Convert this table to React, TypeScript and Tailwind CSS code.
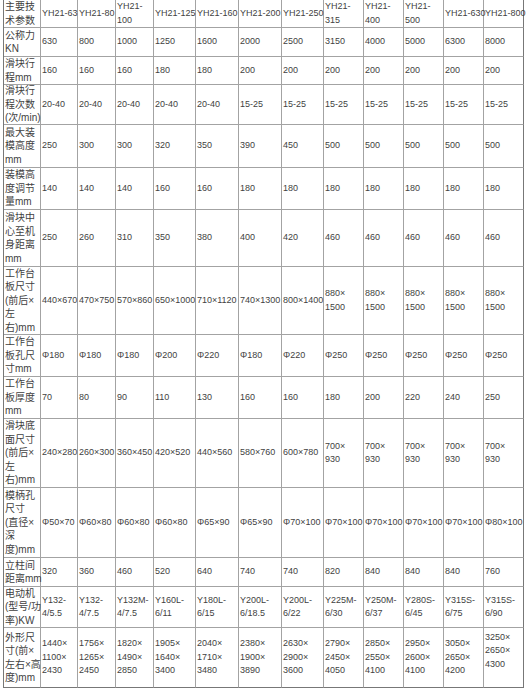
const COLS = [36, 36, 37, 37, 41, 42, 42, 41, 39, 39, 39, 39, 39];
const ROWS = [27, 28, 27, 39, 42, 41, 56, 67, 41, 41, 68, 69, 28, 40, 59];

const DATA: string[][] = [
  ['主要技\n术参数', 'YH21-63', 'YH21-80', 'YH21-\n100', 'YH21-125', 'YH21-160', 'YH21-200', 'YH21-250', 'YH21-\n315', 'YH21-\n400', 'YH21-\n500', 'YH21-630', 'YH21-800'],
  ['公称力\nKN', '630', '800', '1000', '1250', '1600', '2000', '2500', '3150', '4000', '5000', '6300', '8000'],
  ['滑块行\n程mm', '160', '160', '160', '180', '180', '200', '200', '200', '200', '200', '200', '200'],
  ['滑块行\n程次数\n(次/min)', '20-40', '20-40', '20-40', '20-40', '20-40', '15-25', '15-25', '15-25', '15-25', '15-25', '15-25', '15-25'],
  ['最大装\n模高度\nmm', '250', '300', '300', '320', '350', '390', '450', '500', '500', '500', '500', '500'],
  ['装模高\n度调节\n量mm', '140', '140', '140', '160', '160', '180', '180', '180', '180', '180', '180', '180'],
  ['滑块中\n心至机\n身距离\nmm', '250', '260', '310', '350', '380', '400', '420', '460', '460', '460', '460', '460'],
  ['工作台\n板尺寸\n(前后×\n左\n右)mm', '440×670', '470×750', '570×860', '650×1000', '710×1120', '740×1300', '800×1400', '880×\n1500', '880×\n1500', '880×\n1500', '880×\n1500', '880×\n1500'],
  ['工作台\n板孔尺\n寸mm', 'Φ180', 'Φ180', 'Φ180', 'Φ200', 'Φ220', 'Φ180', 'Φ220', 'Φ250', 'Φ250', 'Φ250', 'Φ250', 'Φ250'],
  ['工作台\n板厚度\nmm', '70', '80', '90', '110', '130', '160', '160', '180', '200', '220', '240', '250'],
  ['滑块底\n面尺寸\n(前后×\n左\n右)mm', '240×280', '260×300', '360×450', '420×520', '440×560', '580×760', '600×780', '700×\n930', '700×\n930', '700×\n930', '700×\n930', '700×\n930'],
  ['模柄孔\n尺寸\n(直径×\n深\n度)mm', 'Φ50×70', 'Φ60×80', 'Φ60×80', 'Φ60×80', 'Φ65×90', 'Φ65×90', 'Φ70×100', 'Φ70×100', 'Φ70×100', 'Φ70×100', 'Φ70×100', 'Φ80×100'],
  ['立柱间\n距离mm', '320', '360', '460', '520', '640', '740', '740', '820', '840', '840', '840', '760'],
  ['电动机\n(型号/功\n率)KW', 'Y132-\n4/5.5', 'Y132-\n4/7.5', 'Y132M-\n4/7.5', 'Y160L-\n6/11', 'Y180L-\n6/15', 'Y200L-\n6/18.5', 'Y200L-\n6/22', 'Y225M-\n6/30', 'Y250M-\n6/37', 'Y280S-\n6/45', 'Y315S-\n6/75', 'Y315S-\n6/90'],
  ['外形尺\n寸(前×\n左右×高\n度)mm', '1440×\n1100×\n2430', '1756×\n1265×\n2450', '1820×\n1490×\n2850', '1905×\n1640×\n3400', '2040×\n1710×\n3480', '2380×\n1900×\n3890', '2630×\n2900×\n3600', '2790×\n2450×\n4050', '2850×\n2550×\n4100', '2950×\n2600×\n4100', '3050×\n2650×\n4200', '3250×\n2650×\n4300\n\u00a0'],
];

const lastCol = COLS.length - 1;
const lastRow = ROWS.length - 1;

export default function App() {
  return (
    <div className="h-[689px] w-[528px] overflow-hidden bg-white pl-[3px] font-['Liberation_Sans','Noto_Sans_CJK_SC',sans-serif] text-[9px] leading-[13.5px] text-[#3f3f3f]">
      <div
        className="grid w-max border-l border-[#777]"
        style={{
          gridTemplateColumns: COLS.map((w) => `${w + 1}px`).join(' '),
          gridTemplateRows: ROWS.map((h) => `${h + 1}px`).join(' '),
        }}
      >
        {DATA.map((row, r) =>
          row.map((cell, c) => (
            <div
              key={`${r}-${c}`}
              className={[
                'flex items-center whitespace-pre border-b border-r pl-px',
                c === 0 ? 'text-[10px]' : '',
                c === lastCol ? 'border-r-[#777]' : 'border-r-[#a3a3a3]',
                r === lastRow ? 'border-b-[#777]' : 'border-b-[#a3a3a3]',
              ].join(' ')}
            >
              {cell}
            </div>
          ))
        )}
      </div>
    </div>
  );
}
